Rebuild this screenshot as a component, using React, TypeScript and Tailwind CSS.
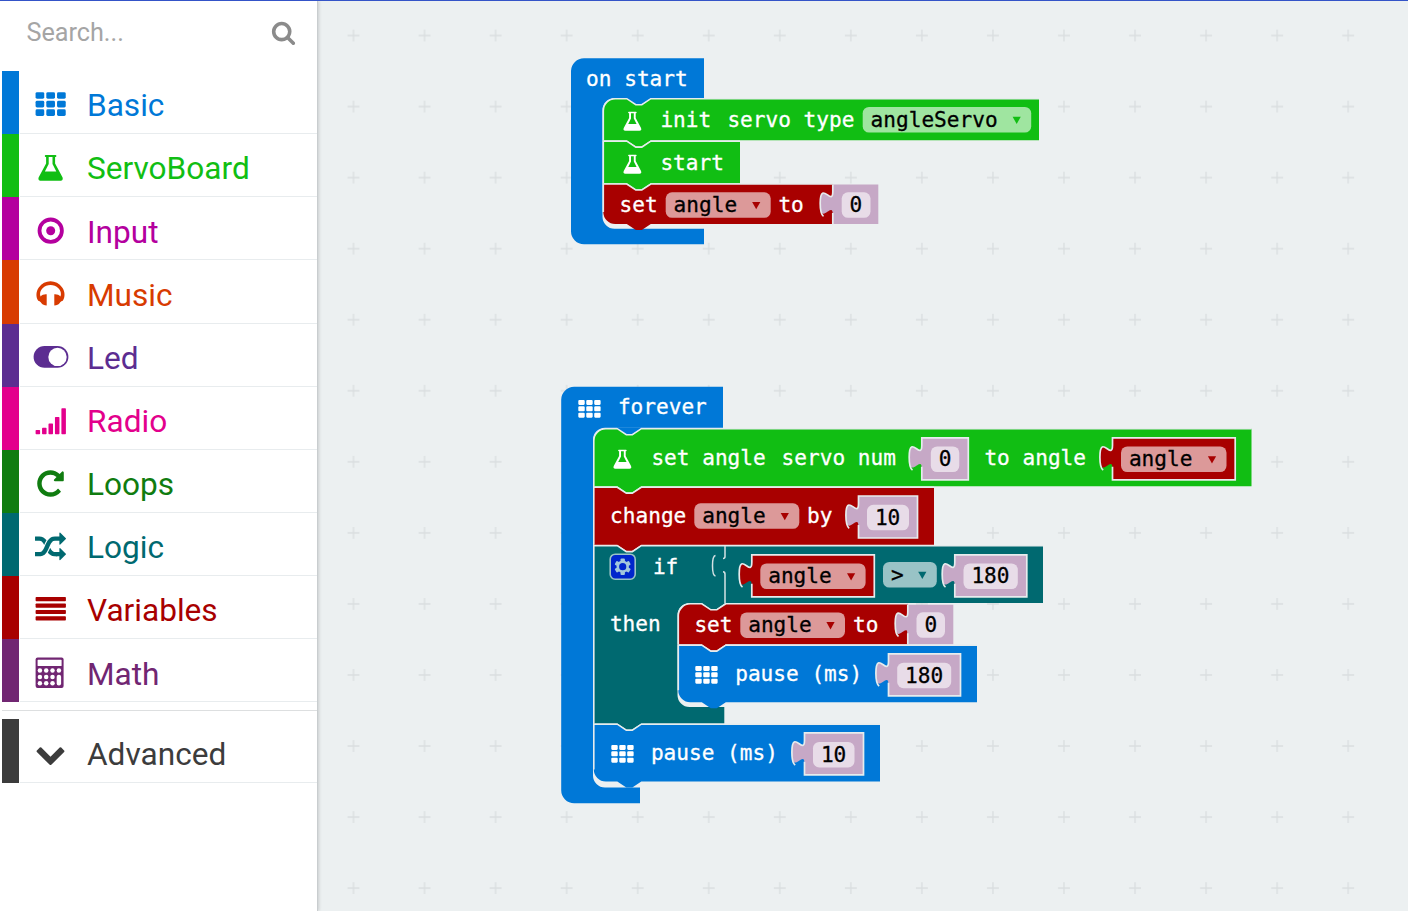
import React from "react";

const GREEN = "#11be13";
const BLUE = "#0078d7";
const RED = "#a80000";
const TEAL = "#006970";
const MAUVE = "#c6a8c6";
const EDGE = "#e6eced";

/* ---------- toolbox icons ---------- */

type IconProps = { className?: string };

function Glyph({ d, className }: { d: string; className?: string }) {
  return (
    <svg viewBox="0 0 1792 1792" fill="currentColor" className={className}>
      <path d={d} />
    </svg>
  );
}

const SEARCH =
  "M1216 832q0-185-131.5-316.5t-316.5-131.5-316.5 131.5-131.5 316.5 131.5 316.5 316.5 131.5 316.5-131.5 131.5-316.5zm512 832q0 52-38 90t-90 38q-54 0-90-38l-343-342q-179 124-399 124-143 0-273.5-55.5t-225-150-150-225-55.5-273.5 55.5-273.5 150-225 225-150 273.5-55.5 273.5 55.5 225 150 150 225 55.5 273.5q0 220-124 399l343 343q37 37 37 90z";
const CHEVRON =
  "M1683 808l-742 741q-19 19-45 19t-45-19l-742-741q-19-19-19-45.5t19-45.5l166-165q19-19 45-19t45 19l531 531 531-531q19-19 45-19t45 19l166 165q19 19 19 45.5t-19 45.5z";
const REPEAT =
  "M1664 256v448q0 26-19 45t-45 19h-448q-42 0-59-40-17-39 14-69l138-138q-148-137-349-137-104 0-198.5 40.5t-163.5 109.5-109.5 163.5-40.5 198.5 40.5 198.5 109.5 163.5 163.5 109.5 198.5 40.5q119 0 225-52t179-147q7-10 23-12 15 0 25 9l137 138q9 8 9.5 20.5t-7.5 22.5q-109 132-264 204.5t-327 72.5q-156 0-298-61t-245-164-164-245-61-298 61-298 164-245 245-164 298-61q147 0 284.5 55.5t244.5 156.5l130-129q29-31 70-14 39 17 39 59z";
const SHUFFLE =
  "M666 481q-60 92-137 273-22-45-37-72.5t-40.5-63.5-51-56.5-63-35-81.5-14.5h-224q-14 0-23-9t-9-23v-192q0-14 9-23t23-9h224q250 0 410 225zm1126 799q0 14-9 23l-320 320q-9 9-23 9-13 0-22.5-9.5t-9.5-22.5v-192q-32 0-85 .5t-81 1-73-1-71-5-64-10.5-63-18.5-58-28.5-59-40-55-53.5-56-69.5q59-93 136-273 22 45 37 72.5t40.5 63.5 51 56.5 63 35 81.5 14.5h256v-192q0-14 9-23t23-9q12 0 24 10l319 319q9 9 9 23zm0-896q0 14-9 23l-320 320q-9 9-23 9-13 0-22.5-9.5t-9.5-22.5v-192h-256q-48 0-87 15t-69 45-51 61.5-45 77.5q-32 62-78 171-29 66-49.5 111t-54 105-64 100-74 83-90 68.5-106.5 42-128 16.5h-224q-14 0-23-9t-9-23v-192q0-14 9-23t23-9h224q48 0 87-15t69-45 51-61.5 45-77.5q32-62 78-171 29-66 49.5-111t54-105 64-100 74-83 90-68.5 106.5-42 128-16.5h256v-192q0-14 9-23t23-9q12 0 24 10l319 319q9 9 9 23z";

/* Nine rounded cells in a 30 x 24 box. */
function GridCells() {
  return (
    <>
      {[0, 8.7, 17.4].map((y) =>
        [0, 10.9, 21.8].map((x) => (
          <rect key={`${x}-${y}`} x={x} y={y} width="8.8" height="6.8" rx="1.5" />
        )),
      )}
    </>
  );
}

/* Flask in a 24 x 26 box. */
function FlaskShape() {
  return (
    <path
      fillRule="evenodd"
      d="M7.2 0h9.8c1.200 0 1.200 2 0 2h-.4v6.400l7.100 13.300c1.300 2.300.2 4.100-2 4.100H2.500c-2.200 0-3.300-1.800-2-4.100L7.600 8.400V2h-.4c-1.200 0-1.200-2 0-2zM10.200 2v7.100L6.400 16.500h11.400L14 9.100V2z"
    />
  );
}

function GridIcon({ className }: IconProps) {
  return (
    <svg viewBox="-1.600 -4.200 33.500 33.500" fill="currentColor" className={className}>
      <GridCells />
    </svg>
  );
}
function FlaskIcon({ className }: IconProps) {
  return (
    <svg viewBox="-4.500 -4 33 33" fill="currentColor" className={className}>
      <FlaskShape />
    </svg>
  );
}
function TargetIcon({ className }: IconProps) {
  return (
    <svg viewBox="0 0 33 33" className={className}>
      <circle cx="16.700" cy="16.700" r="11.200" fill="none" stroke="currentColor" strokeWidth="3.800" />
      <circle cx="16.700" cy="16.700" r="4.500" fill="currentColor" />
    </svg>
  );
}
function HeadphonesIcon({ className }: IconProps) {
  return (
    <svg viewBox="0 0 33 33" fill="currentColor" className={className}>
      <path d="M4.200 23.700C1.700 20 1.900 14.500 4.800 10.500 7.700 6.500 12 4.300 16.500 4.300s8.800 2.200 11.700 6.200c2.900 4 3.100 9.500.6 13.200-1.200.3-2.200 1-3.500 2.700-.8 1-2.400 1.600-5 2.100V17.300c2.600-.2 4.700.6 6.200 2.300C27.600 16.300 26.600 13.300 24.400 11.200 22.200 9 19.500 7.900 16.500 7.900S10.800 9 8.600 11.200C6.400 13.300 5.400 16.300 6.500 19.600c1.500-1.700 3.600-2.500 6.200-2.300v11.200c-2.600-.5-4.200-1.100-5-2.100-1.300-1.700-2.300-2.400-3.500-2.700z" />
    </svg>
  );
}
function ToggleIcon({ className }: IconProps) {
  return (
    <svg viewBox="0 0 36 33" className={className}>
      <rect x=".6" y="6" width="34.800" height="21.800" rx="10.900" fill="currentColor" />
      <circle cx="24.500" cy="16.900" r="9.200" fill="#fff" />
    </svg>
  );
}
function SignalIcon({ className }: IconProps) {
  const bars = [4.2, 6.5, 10.8, 17.2, 26];
  return (
    <svg viewBox="0 0 33 33" fill="currentColor" className={className}>
      {bars.map((h, i) => (
        <rect key={h} x={1.6 + i * 6.45} y={30.2 - h} width="4.500" height={h} rx=".7" />
      ))}
    </svg>
  );
}
function LinesIcon({ className }: IconProps) {
  return (
    <svg viewBox="0 0 33 33" fill="currentColor" className={className}>
      {[4, 10.5, 16.900, 23.300].map((y) => (
        <rect key={y} x="1.600" y={y} width="30.300" height="4.200" rx=".8" />
      ))}
    </svg>
  );
}
function CalculatorIcon({ className }: IconProps) {
  return (
    <svg viewBox="0 0 33 33" className={className}>
      <rect x="1.600" y="1.500" width="28" height="30.500" rx="2" fill="currentColor" />
      <rect x="3.600" y="3.800" width="24" height="6.200" rx=".6" fill="#fff" />
      {[14.6, 20.9, 27.2].map((cy) =>
        [5.9, 12.2, 18.5].map((cx) => <circle key={`${cx}-${cy}`} cx={cx} cy={cy} r="2.250" fill="#fff" />),
      )}
      <circle cx="24.900" cy="14.600" r="2.250" fill="#fff" />
      <rect x="22.700" y="18.700" width="4.400" height="10.800" rx="2.100" fill="#fff" />
    </svg>
  );
}

/* ---------- toolbox ---------- */

type Category = { name: string; bar: string; text: string; icon: React.ReactNode };

const categories: Category[] = [
  { name: "Basic", bar: "bg-[#0078d7]", text: "text-[#0078d7]", icon: <GridIcon className="size-[33px]" /> },
  { name: "ServoBoard", bar: "bg-[#11be13]", text: "text-[#11be13]", icon: <FlaskIcon className="size-[33px]" /> },
  { name: "Input", bar: "bg-[#b4009e]", text: "text-[#b4009e]", icon: <TargetIcon className="size-[33px]" /> },
  { name: "Music", bar: "bg-[#d83b01]", text: "text-[#d83b01]", icon: <HeadphonesIcon className="size-[33px]" /> },
  { name: "Led", bar: "bg-[#5c2d91]", text: "text-[#5c2d91]", icon: <ToggleIcon className="h-[33px] w-9" /> },
  { name: "Radio", bar: "bg-[#e3008c]", text: "text-[#e3008c]", icon: <SignalIcon className="size-[33px]" /> },
  { name: "Loops", bar: "bg-[#107c10]", text: "text-[#107c10]", icon: <Glyph d={REPEAT} className="mt-px size-[31px]" /> },
  { name: "Logic", bar: "bg-[#006970]", text: "text-[#006970]", icon: <Glyph d={SHUFFLE} className="mt-0.5 size-[31px]" /> },
  { name: "Variables", bar: "bg-[#a80000]", text: "text-[#a80000]", icon: <LinesIcon className="size-[33px]" /> },
  { name: "Math", bar: "bg-[#712672]", text: "text-[#712672]", icon: <CalculatorIcon className="size-[33px]" /> },
];

function Row({ name, bar, text, icon }: Category) {
  return (
    <div className="flex h-[63.15px] pl-0.5">
      <div className={`w-[17px] ${bar}`} />
      <div className={`ml-px flex flex-1 items-center border-b border-[#e8ecee] ${text}`}>
        <div className="flex w-[61.500px] items-center justify-center pt-[4.500px]">{icon}</div>
        <span className="ml-[5.500px] pt-2 text-[31.600px] leading-none">{name}</span>
      </div>
    </div>
  );
}

function Toolbox() {
  return (
    <aside className="z-10 w-[318px] shrink-0 border-r border-[#c9cdcf] bg-white shadow-[1px_0_3px_rgba(0,0,0,0.15)]">
      <div className="flex h-[70px] items-start justify-between pl-[26.500px] pr-[21px] pt-[18px]">
        <span className="text-[25.200px] leading-7 text-[#a5a5a5]">Search...</span>
        <Glyph d={SEARCH} className="mt-px size-[25px] text-[#8b8b8b]" />
      </div>
      {categories.map((c) => (
        <Row key={c.name} {...c} />
      ))}
      <div className="mt-2 mb-2 ml-0.5 h-px bg-[#dddfe0]" />
      <Row
        name="Advanced"
        bar="bg-[#3c3c3c]"
        text="text-[#3c3c3c]"
        icon={<Glyph d={CHEVRON} className="mt-0.5 size-[31px]" />}
      />
    </aside>
  );
}

/* ---------- block shapes ---------- */

const TAB_UPPER = "c0 15.800-12.600-12.600-12.600 11.850";
const TAB = `${TAB_UPPER}s12.600-3.950 12.600 11.850`;
const TAB_LIT = `${TAB_UPPER}c0 8 1.500 11.800 3.300 13`;

type StatementProps = {
  x: number;
  y: number;
  w: number;
  h: number;
  fill: string;
  roundTop?: boolean;
  roundBottom?: boolean;
};

/* Stackable block: notch on the top edge, matching bump on the bottom edge. */
function Statement({ x, y, w, h, fill, roundTop, roundBottom }: StatementProps) {
  const top = `${roundTop ? `V${y + 12} a12 12 0 0 1 12 -12` : `V${y}`} H${x + 23.5} l9 6 h6 l9 -6 H${x + w}`;
  const bottom = `H${x + 47.5} l-9 6 h-6 l-9 -6 ${roundBottom ? `H${x + 12} a12 12 0 0 1 -12 -12` : `H${x}`}`;
  return (
    <>
      <path d={`M${x} ${y + h - 12} ${top} V${y + h} ${bottom} Z`} fill={fill} />
      <path d={`M${x} ${y + h - (roundBottom ? 12 : 0)} ${top}`} fill="none" stroke={EDGE} strokeWidth="1.600" />
    </>
  );
}

/* Inline value block with an outlined body and a plug on its left side. */
function Value({ x, y, w, fill }: { x: number; y: number; w: number; fill: string }) {
  return (
    <>
      <path d={`M${x} ${y} V${y + 7.5} ${TAB} V${y + 42} h${w} v-42 Z`} fill={fill} />
      <path
        d={`M${x} ${y + 29} V${y + 42} h${w} v-42 H${x} v7.500 ${TAB_LIT}`}
        fill="none"
        stroke={EDGE}
        strokeWidth="1.700"
      />
    </>
  );
}

/* Value plugged into the outer end of a statement. */
function EndValue({ x, y }: { x: number; y: number }) {
  return (
    <>
      <path d={`M${x} ${y} v7 ${TAB} V${y + 39.5} h45.500 v-39.500 Z`} fill={MAUVE} />
      <path
        d={`M${x} ${y} v7 ${TAB_LIT} M${x} ${y + 28.5} V${y + 39.5}`}
        fill="none"
        stroke={EDGE}
        strokeWidth="1.700"
      />
    </>
  );
}

function Label({ x, y, dark, children }: { x: number; y: number; dark?: boolean; children: string }) {
  const color = dark ? "#000" : "#fff";
  return (
    <text x={x + 0.4} y={y} fill={color} stroke={color} strokeWidth=".3">
      {children}
    </text>
  );
}

function Field({ x, y, w, text, arrow }: { x: number; y: number; w: number; text: string; arrow?: string }) {
  const ax = x + w - 14.5;
  return (
    <>
      <rect x={x} y={y} width={w} height="25.500" rx="6.300" fill="#fff" fillOpacity=".6" />
      <Label x={x + 7.5} y={y + 19.9} dark>
        {text}
      </Label>
      {arrow && <path d={`M${ax - 4.1} ${y + 9.7} h8.200 l-4.100 7.300 Z`} fill={arrow} />}
    </>
  );
}

function MiniFlask({ x, y }: { x: number; y: number }) {
  return (
    <g transform={`translate(${x} ${y}) scale(.735)`} fill="#fff">
      <FlaskShape />
    </g>
  );
}
function MiniGrid({ x, y }: { x: number; y: number }) {
  return (
    <g transform={`translate(${x} ${y}) scale(.73)`} fill="#fff">
      <GridCells />
    </g>
  );
}

function Gear() {
  return (
    <g>
      <rect x="610.200" y="554.200" width="25" height="25" rx="5" fill="#0026cc" stroke="#99c3c6" strokeWidth="1.600" />
      <g transform="translate(622.700 566.700)">
        <g fill="#a3c8dc">
          {[0, 60, 120].map((a) => (
            <rect key={a} x="-2.200" y="-8.200" width="4.400" height="16.400" rx="1" transform={`rotate(${a})`} />
          ))}
          <circle r="6.200" />
        </g>
        <circle r="3.600" fill="#0026cc" />
      </g>
    </g>
  );
}

function StartStack() {
  return (
    <g>
      <path
        d="M571 71 a13 13 0 0 1 13 -12.700 H704 V98 H614.500 a12 12 0 0 0 -12 12 V216.700 a12 12 0 0 0 12 12 H704 V244.300 H584 a13 13 0 0 1 -13 -13 Z"
        fill={BLUE}
      />
      <path d="M626.500 97.500 v1 l9 6 h6 l9 -6 v-1 Z" fill={BLUE} />
      <Label x={585.7} y={86}>on start</Label>

      <Statement x={603.3} y={98.7} w={435.7} h={41.5} fill={GREEN} roundTop />
      <MiniFlask x={623.5} y={111.8} />
      <Label x={660} y={127}>init</Label>
      <Label x={727} y={127}>servo type</Label>
      <Field x={862.7} y={107} w={168.5} text="angleServo" arrow={GREEN} />

      <Statement x={603.3} y={141.2} w={136.7} h={42} fill={GREEN} />
      <MiniFlask x={623.5} y={154.8} />
      <Label x={660} y={170}>start</Label>

      <Statement x={603.3} y={184} w={229.7} h={40} fill={RED} roundBottom />
      <Label x={619.2} y={212}>set</Label>
      <Field x={665.7} y={192.3} w={105} text="angle" arrow={RED} />
      <Label x={778} y={212}>to</Label>
      <EndValue x={832.8} y={184.5} />
      <Field x={841.7} y={192.3} w={28.8} text="0" />
    </g>
  );
}

function ForeverStack() {
  return (
    <g>
      <path
        d="M561.200 400 a13 13 0 0 1 13 -13.200 H723 V427.800 H605 a12 12 0 0 0 -12 12 V775.500 a12 12 0 0 0 12 12 H640 V803.300 H574.200 a13 13 0 0 1 -13 -13 Z"
        fill={BLUE}
      />
      <path d="M617 427.500 v1 l9 6 h6 l9 -6 v-1 Z" fill={BLUE} />
      <MiniGrid x={578.3} y={400} />
      <Label x={617.5} y={414}>forever</Label>

      <Statement x={593.8} y={428.7} w={657.7} h={57.5} fill={GREEN} roundTop />
      <MiniFlask x={613.5} y={449.8} />
      <Label x={651} y={465}>set angle</Label>
      <Label x={781.2} y={465}>servo num</Label>
      <Value x={921.8} y={437.8} w={46.5} fill={MAUVE} />
      <Field x={930.8} y={446.5} w={28.5} text="0" />
      <Label x={984} y={465}>to angle</Label>
      <Value x={1112.5} y={437.8} w={122.7} fill={RED} />
      <Field x={1121} y={446.5} w={105.5} text="angle" arrow={RED} />

      <Statement x={593.8} y={487.3} w={340.2} h={57.5} fill={RED} />
      <Label x={609.7} y={523.2}>change</Label>
      <Field x={694.3} y={503.3} w={105} text="angle" arrow={RED} />
      <Label x={806.7} y={523.2}>by</Label>
      <Value x={858.5} y={496} w={59} fill={MAUVE} />
      <Field x={867} y={504.8} w={42} text="10" />

      <path
        d="M593.800 545.700 H617.300 l9 6 h6 l9 -6 H1043 V603 H725.500 l-9 6 h-6 l-9 -6 H689.500 a12 12 0 0 0 -12 12 V695 a12 12 0 0 0 12 12 H724.300 V723.500 H641.300 l-9 6 h-6 l-9 -6 H593.800 Z"
        fill={TEAL}
      />
      <path d="M593.800 723.500 V545.700 H617.300 l9 6 h6 l9 -6 H1043" fill="none" stroke={EDGE} strokeWidth="1.600" />
      <path
        d="M725 546 V556.500 q0 2 -2 2 M723 571.700 q2 0 2 2.500 V603.500 M715.500 555.500 c-4 .5 -4 20 0 20.500"
        fill="none"
        stroke="#d5e2e4"
        strokeWidth="1.500"
      />
      <Gear />
      <Label x={652.5} y={573.8}>if</Label>
      <Value x={751.8} y={554.8} w={122.5} fill={RED} />
      <Field x={760.3} y={563.5} w={105.3} text="angle" arrow={RED} />
      <Field x={883} y={562} w={53.8} text=">" arrow={TEAL} />
      <Value x={954.8} y={554.8} w={72} fill={MAUVE} />
      <Field x={963.5} y={563.5} w={54.3} text="180" />
      <Label x={609.5} y={631}>then</Label>

      <Statement x={678.3} y={603.8} w={229.2} h={40.5} fill={RED} roundTop />
      <Label x={694} y={632}>set</Label>
      <Field x={740.3} y={612.4} w={104.7} text="angle" arrow={RED} />
      <Label x={852.7} y={632}>to</Label>
      <EndValue x={907.8} y={604.7} />
      <Field x={916.5} y={612.3} w={28.5} text="0" />

      <Statement x={678.3} y={645.2} w={298.7} h={57} fill={BLUE} roundBottom />
      <MiniGrid x={695.3} y={666} />
      <Label x={734.8} y={681}>pause (ms)</Label>
      <Value x={888.5} y={653.8} w={72} fill={MAUVE} />
      <Field x={897.2} y={662.7} w={54} text="180" />

      <Statement x={593.8} y={724.2} w={286.2} h={57.3} fill={BLUE} roundBottom />
      <MiniGrid x={611.3} y={745} />
      <Label x={650.5} y={760}>pause (ms)</Label>
      <Value x={804.5} y={732.8} w={59} fill={MAUVE} />
      <Field x={813} y={741.900} w={41.5} text="10" />
    </g>
  );
}

function Workspace() {
  return (
    <main className="min-w-0 flex-1 bg-[#ecf0f1]">
      <svg
        viewBox="318 1 1090 910"
        className="block h-[910px] w-[1090px] whitespace-pre font-['DejaVu_Sans_Mono',monospace] text-[21.100px]"
      >
        <defs>
          <pattern id="grid" x="318" y="0" width="71.050" height="71.050" patternUnits="userSpaceOnUse">
            <path d="M29.500 35.500 h12 M35.500 29.500 v12" stroke="#dadee0" strokeWidth="1.300" />
          </pattern>
        </defs>
        <rect x="318" y="0" width="1090" height="911" fill="url(#grid)" />
        <StartStack />
        <ForeverStack />
      </svg>
    </main>
  );
}

export default function App() {
  return (
    <div className="flex h-[911px] w-[1408px] overflow-hidden border-t border-[#3454c8] bg-white font-[Roboto,sans-serif]">
      <Toolbox />
      <Workspace />
    </div>
  );
}
